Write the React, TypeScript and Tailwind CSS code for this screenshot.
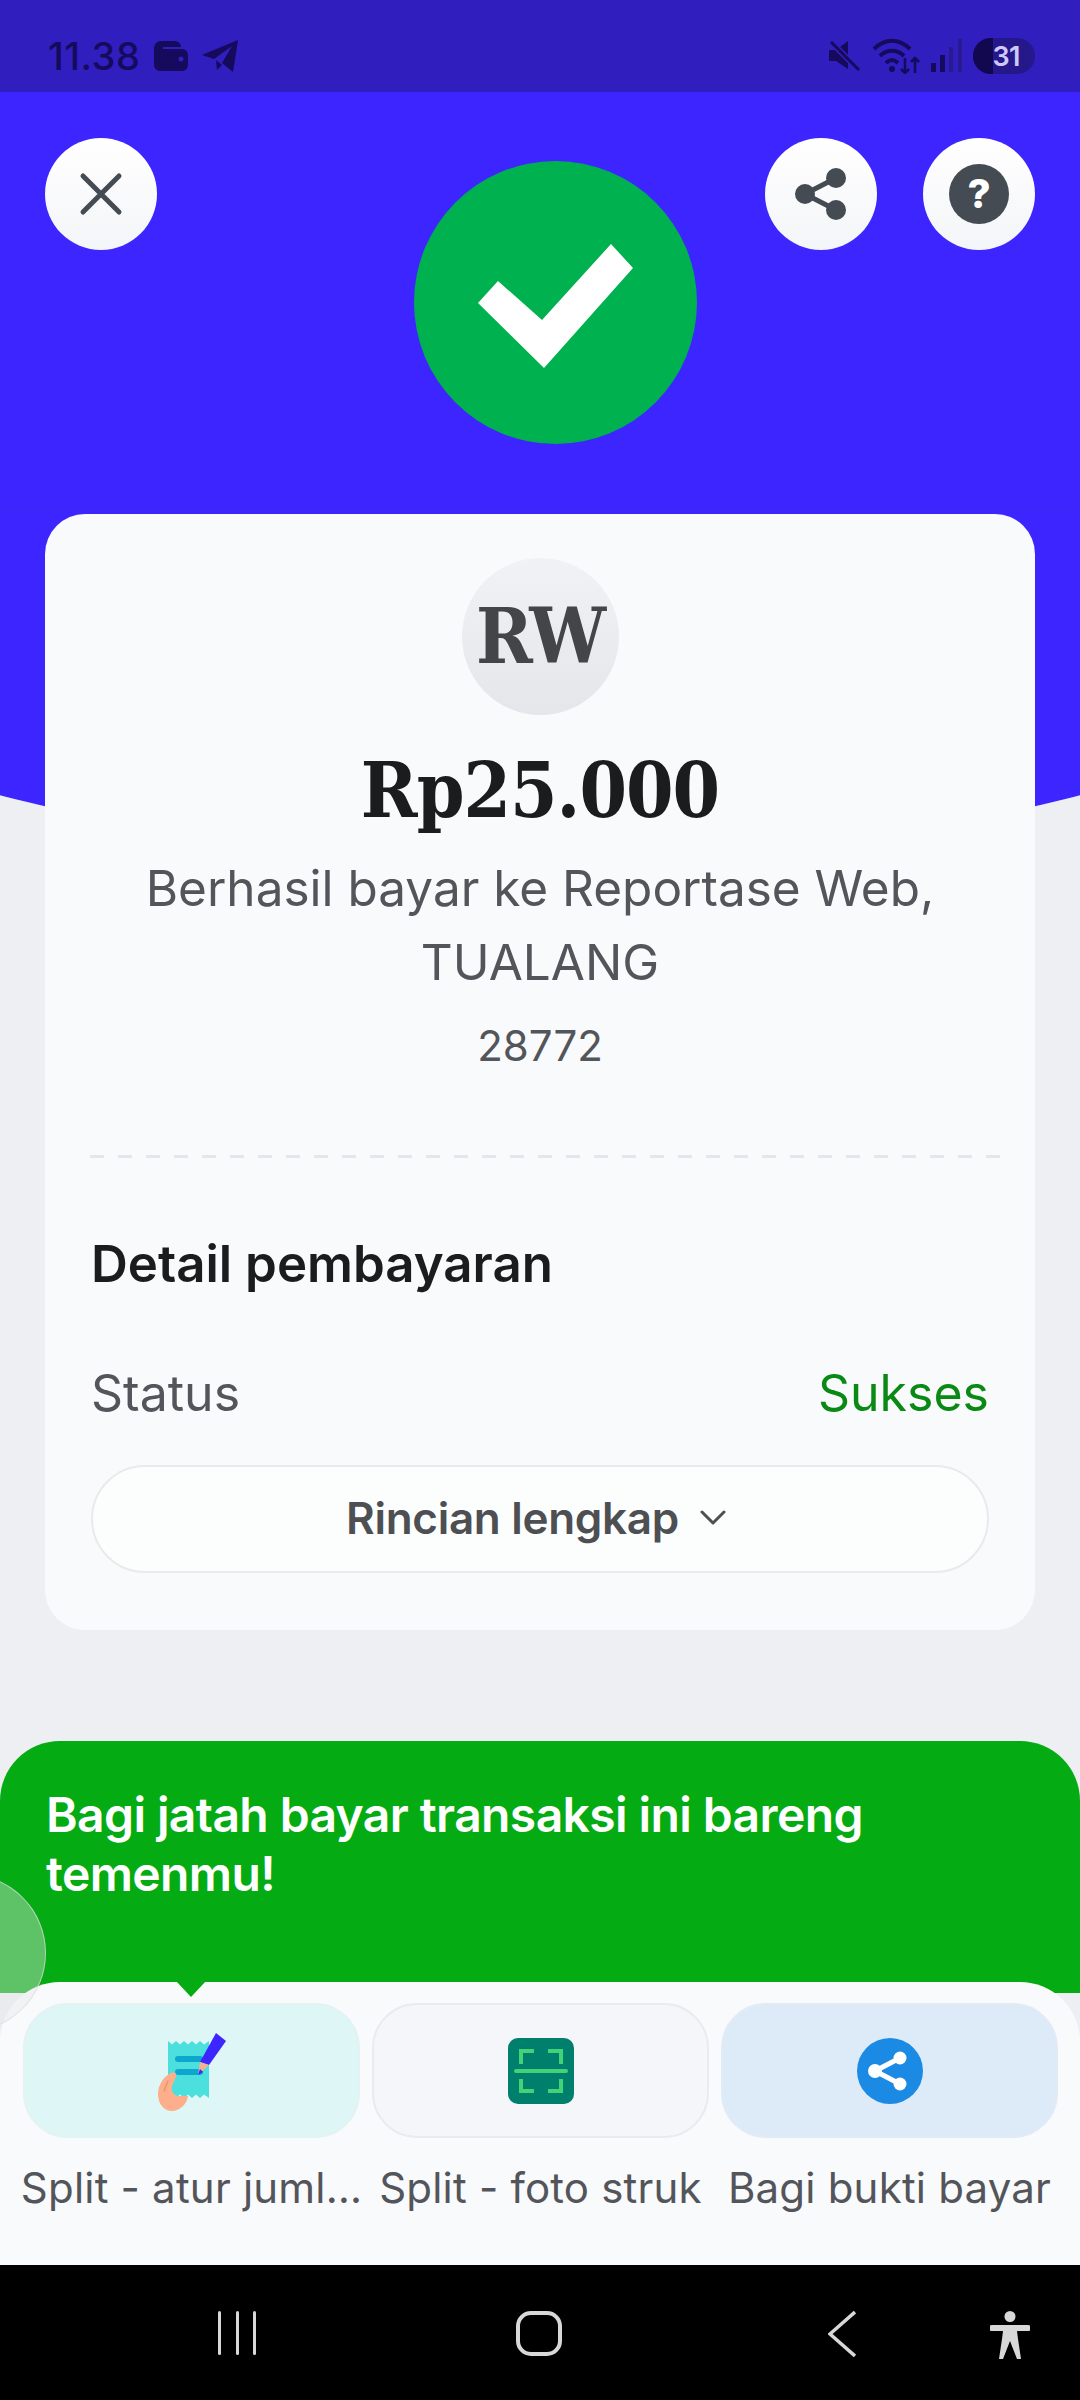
const sans = "font-['Inter','Noto_Sans',sans-serif]";

function StatusBar() {
  return (
    <div className="flex h-[92px] shrink-0 items-center justify-between bg-[#311ebf] pl-[48px] pr-[45px] pt-[20px] text-[#150a5c]">
      <div className="flex items-center gap-[14px]">
        <span className="text-[38px] font-medium leading-none tracking-[0.5px]">11.38</span>
        <svg width="34" height="30" viewBox="0 0 34 30" fill="#150a5c">
          <path d="M7 0h14a6 6 0 0 1 6 6H9v2h19a6 6 0 0 1 6 6v10a6 6 0 0 1-6 6H6a6 6 0 0 1-6-6V7a7 7 0 0 1 7-7z" />
          <circle cx="27" cy="18" r="2.5" fill="#311ebf" />
        </svg>
        <svg width="36" height="32" viewBox="0 0 36 32" fill="#150a5c">
          <path d="M36 0 31 32 20 23 30 6 12 19 0 15z" />
          <path d="M14 20l6 5-5 5z" />
        </svg>
      </div>
      <div className="flex items-center gap-[11px]">
        <svg width="32" height="30" viewBox="0 0 32 30" fill="#150a5c">
          <path d="M0 9h7l12-9v28L7 20H0z" />
          <path d="M2 1l28 28" stroke="#311ebf" strokeWidth="6" />
          <path d="M2 1l28 28" stroke="#150a5c" strokeWidth="3" />
        </svg>
        <svg width="48" height="36" viewBox="0 0 48 36" fill="none" stroke="#150a5c">
          <path d="M2 11c11-11 25-11 36 0" strokeWidth="4" />
          <path d="M8 18c7-7 17-7 24 0" strokeWidth="4" />
          <path d="M14 25c4-4 8-4 12 0" strokeWidth="4" />
          <circle cx="20" cy="31" r="3" fill="#150a5c" stroke="none" />
          <path d="M33 20v15m-4-4 4 4 4-4M43 35V20m-4 4 4-4 4 4" strokeWidth="2.5" />
        </svg>
        <svg width="31" height="34" viewBox="0 0 31 34">
          <rect x="0" y="24" width="5" height="9" fill="#150a5c" />
          <rect x="9" y="16" width="5" height="17" fill="#150a5c" />
          <rect x="18" y="8" width="4" height="25" fill="#2a1a92" />
          <rect x="27" y="0" width="4" height="33" fill="#2a1a92" />
        </svg>
        <div className="relative flex h-[36px] w-[62px] items-center justify-end overflow-hidden rounded-full bg-[#24188a] pr-[15px]">
          <div className="absolute inset-y-0 left-0 w-[20px] bg-[#12084f]" />
          <span className="relative text-[27px] font-semibold leading-none tracking-[-0.5px] text-[#cfc9f7]">31</span>
        </div>
      </div>
    </div>
  );
}

function RoundButton({ children }: { children: React.ReactNode }) {
  return (
    <button className="flex h-[112px] w-[112px] shrink-0 items-center justify-center rounded-full bg-gradient-to-b from-white to-[#f4f5f8]">
      {children}
    </button>
  );
}

function Header() {
  return (
    <div className="relative flex h-[420px] shrink-0 items-start border-b border-[#3a2bf0] bg-[#3d25ff] pl-[45px] pt-[46px]">
      <RoundButton>
        <svg width="44" height="44" viewBox="0 0 44 44" stroke="#444b52" strokeWidth="5" strokeLinecap="round">
          <path d="M4 4l36 36M40 4 4 40" />
        </svg>
      </RoundButton>
      <div className="ml-[257px] mt-[23px] flex h-[283px] w-[283px] shrink-0 items-center justify-center rounded-full bg-[#00b14f] pt-[8px]">
        <svg width="156" height="125" viewBox="0 0 156 125" fill="white">
          <path d="M20 37 0 59l66 65L155 24 133 0 64 76z" />
        </svg>
      </div>
      <div className="ml-[68px] flex gap-[46px]">
        <RoundButton>
          <svg width="54" height="54" viewBox="0 0 54 54" fill="#444b52">
            <circle cx="42" cy="11" r="10" />
            <circle cx="11" cy="27" r="10" />
            <circle cx="42" cy="43" r="10" />
            <path d="M11 27 42 11M11 27l31 16" stroke="#444b52" strokeWidth="5" />
          </svg>
        </RoundButton>
        <RoundButton>
          <div className="flex h-[60px] w-[60px] items-center justify-center rounded-full bg-[#444b52] text-[40px] font-extrabold leading-none text-white">
            ?
          </div>
        </RoundButton>
      </div>
    </div>
  );
}

function PaymentCard() {
  return (
    <div className="relative mx-[45px] mt-[2px] flex h-[1116px] flex-col items-center rounded-[40px] bg-[#f9fafc] px-[46px] pt-[44px]">
      <div className="flex h-[157px] w-[157px] items-center justify-center rounded-full bg-gradient-to-b from-[#f1f2f5] to-[#e4e6ea] font-['DejaVu_Serif_Condensed','DejaVu_Serif',serif] text-[76px] font-bold leading-none tracking-[-2px] text-[#444549]">
        RW
      </div>
      <div className="mt-[30px] font-['DejaVu_Serif_Condensed','DejaVu_Serif',serif] text-[76px] font-bold leading-[92px] tracking-[-1px] text-[#1b1c1e]">
        Rp25.000
      </div>
      <div className="mt-[14px] whitespace-nowrap text-center text-[49.5px] leading-[74px] text-[#53555a]">
        Berhasil bayar ke Reportase Web,
        <br />
        TUALANG
      </div>
      <div className="mt-[19px] text-[42px] leading-[56px] text-[#53555a]">28772</div>
      <div className="ml-[15px] mt-[81px] h-[3px] w-[915px] shrink-0 bg-[repeating-linear-gradient(90deg,#e4e6e9_0_14px,transparent_14px_28px)]" />
      <div className="mt-[76px] w-full text-[51px] font-semibold leading-[60px] text-[#1b1c1e]">
        Detail pembayaran
      </div>
      <div className="mt-[69px] flex w-full items-center justify-between text-[50px] leading-[60px]">
        <span className="text-[#53555a]">Status</span>
        <span className="text-[#0a8a14]">Sukses</span>
      </div>
      <button className="mt-[42px] flex h-[108px] w-full items-center justify-center gap-[21px] rounded-full border-[2px] border-[#e8eaed] bg-[#fcfdfd] pb-[2px] pr-[8px] text-[44px] font-semibold tracking-[-0.3px] text-[#4d4f53]">
        Rincian lengkap
        <svg width="26" height="16" viewBox="0 0 26 16" fill="none" stroke="#4d4f53" strokeWidth="3" strokeLinecap="round" strokeLinejoin="round">
          <path d="M2 2l11 11L24 2" />
        </svg>
      </button>
    </div>
  );
}

function ReceiptIcon() {
  return (
    <svg width="72" height="80" viewBox="0 0 72 80">
      <path d="M12 10l4 3.500 4-3.500 4 3.500 4-3.500 4 3.500 4-3.500 4 3.500 4-3.500 4 3.500 5-3.500v57l-5-3.500-4 3.500-4-3.500-4 3.500-4-3.500-4 3.500-4-3.500-4 3.500-8-3z" fill="#4be0de" />
      <rect x="19" y="25" width="28" height="6" rx="3" fill="#0ca6cf" />
      <rect x="19" y="38" width="28" height="6" rx="3" fill="#0ca6cf" />
      <path d="M60 2l10 8-17 24-9-3z" fill="#3d25ff" />
      <path d="M44 31l9 3-11 10z" fill="#f7b08f" />
      <path d="M42 44l2-6 3 3z" fill="#3d25ff" />
      <path d="M15 42c4-2 6 1 5 4l-4 9c-1 5 1 9 6 10h10c-1 8-8 15-16 15S2 73 2 63c0-9 6-18 13-21z" fill="#fdae8a" />
      <path d="M12 50 8 60" stroke="#ee9470" strokeWidth="1.500" strokeLinecap="round" />
    </svg>
  );
}

function ScanIcon() {
  return (
    <svg width="66" height="66" viewBox="0 0 66 66" fill="none">
      <rect width="66" height="66" rx="10" fill="#007f6d" />
      <path d="M26 13H13v13M40 13h13v13M26 53H13V41M40 53h13V41" stroke="#41d376" strokeWidth="4" />
      <path d="M8 33h50" stroke="#41d376" strokeWidth="4" strokeLinecap="round" />
    </svg>
  );
}

function ShareIcon() {
  return (
    <svg width="66" height="66" viewBox="0 0 66 66">
      <circle cx="33" cy="33" r="33" fill="#1a8ae5" />
      <path d="M18 33 43 20M18 33l25 13" stroke="white" strokeWidth="5" />
      <circle cx="43" cy="20" r="6.5" fill="white" />
      <circle cx="18" cy="33" r="7" fill="white" />
      <circle cx="43" cy="46" r="6.5" fill="white" />
    </svg>
  );
}

const actions = [
  { label: "Split - atur juml…", tile: "bg-[#dff6f6] border-[#e3f2f3]", icon: <ReceiptIcon /> },
  { label: "Split - foto struk", tile: "bg-[#f4f6f9] border-[#e9ebee]", icon: <ScanIcon /> },
  { label: "Bagi bukti bayar", tile: "bg-[#ddeaf8] border-[#e2ebf5]", icon: <ShareIcon /> },
];

function BottomSheet() {
  return (
    <div className="relative -mt-[11px] h-[283px] shrink-0 rounded-t-[60px] bg-[#f9fafc] pl-[23px] pr-[22px] pt-[21px]">
      <div className="absolute left-[176px] -top-px h-0 w-0 border-x-[15px] border-t-[16px] border-x-transparent border-t-[#05ab12]" />
      <div className="grid grid-cols-3 gap-[12px]">
        {actions.map((action) => (
          <div key={action.label} className="flex flex-col items-center">
            <div className={`flex h-[135px] w-full items-center justify-center rounded-[45px] border-[2px] ${action.tile}`}>
              {action.icon}
            </div>
            <div className="mt-[24px] whitespace-nowrap text-[42px] leading-[52px] tracking-[0.2px] text-[#53555a]">{action.label}</div>
          </div>
        ))}
      </div>
    </div>
  );
}

function NavBar() {
  return (
    <div className="flex h-[135px] shrink-0 items-start bg-black pl-[218px] pt-[46px]">
      <div className="flex h-[44px] w-[38px] justify-between">
        <div className="w-[3px] rounded-full bg-[#d8d8d8]" />
        <div className="w-[3px] rounded-full bg-[#d8d8d8]" />
        <div className="w-[3px] rounded-full bg-[#d8d8d8]" />
      </div>
      <div className="ml-[260px] h-[45px] w-[46px] rounded-[15px] border-[4px] border-[#d8d8d8]" />
      <svg className="ml-[266px]" width="28" height="46" viewBox="0 0 28 46" fill="none" stroke="#d8d8d8" strokeWidth="3.5">
        <path d="M27 1 2 23l25 22" />
      </svg>
      <svg className="ml-[134px]" width="40" height="48" viewBox="0 0 40 48" fill="#d8d8d8">
        <circle cx="20" cy="5.5" r="5.5" />
        <path d="M2 14h36a2 2 0 0 1 0 6H27l1 8 3 20h-4l-7-18-7 18H9l3-20 1-8H2a2 2 0 0 1 0-6z" />
      </svg>
    </div>
  );
}

export default function App() {
  return (
    <div className={`relative flex h-[2400px] w-[1080px] flex-col overflow-hidden bg-[#eeeff3] ${sans}`}>
      <div className="absolute -left-[200px] top-[300px] h-[554px] w-[1480px] rounded-b-[740px_186px] bg-[#3d25ff]" />
      <StatusBar />
      <Header />
      <div className="relative flex flex-1 flex-col">
        <PaymentCard />
        <div className="mt-[111px] h-[252px] rounded-t-[60px] bg-[#05ab12] pl-[46px] pt-[44px] text-[48px] font-semibold leading-[59px] tracking-[-0.6px] text-white">
          Bagi jatah bayar transaksi ini bareng
          <br />
          temenmu!
        </div>
        <BottomSheet />
      </div>
      <NavBar />
      <div className="absolute -left-[112px] top-[1874px] h-[158px] w-[158px] rounded-full border border-[#d9dbde]/70 bg-[#e4e6e8]/40" />
    </div>
  );
}
